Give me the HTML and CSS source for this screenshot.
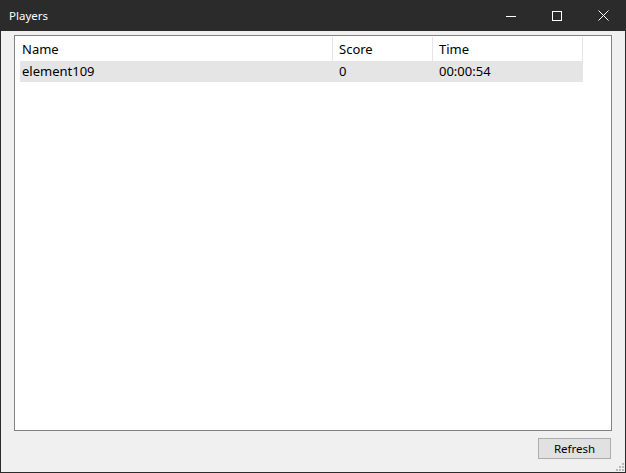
FILE: index.html
```html
<!DOCTYPE html>
<html>
<head>
<meta charset="utf-8">
<link rel="stylesheet" href="styles.css">
</head>
<body>
<div class="window">
  <div class="titlebar">
    <span class="title">Players</span>
    <div class="controls">
      <span class="ctl"><svg width="10" height="10" viewBox="0 0 10 10"><line x1="0" y1="5.5" x2="10" y2="5.5" stroke="#fff" stroke-width="1"/></svg></span>
      <span class="ctl"><svg width="10" height="10" viewBox="0 0 10 10"><rect x="0.5" y="0.5" width="9" height="9" fill="none" stroke="#fff" stroke-width="1"/></svg></span>
      <span class="ctl"><svg width="11" height="11" viewBox="0 0 11 11"><path d="M0.5 0.5 L10.5 10.5 M10.5 0.5 L0.5 10.5" stroke="#fff" stroke-width="1"/></svg></span>
    </div>
  </div>
  <div class="content">
    <div class="frame">
      <div class="table">
        <div class="row header">
          <div class="cell c1">Name</div>
          <div class="cell c2">Score</div>
          <div class="cell c3">Time</div>
        </div>
        <div class="row data">
          <div class="cell c1">element109</div>
          <div class="cell c2">0</div>
          <div class="cell c3">00:00:54</div>
        </div>
      </div>
    </div>
    <div class="footer">
      <button class="btn">Refresh</button>
    </div>
  </div>
  <div class="grip">
    <svg width="8" height="8" viewBox="0 0 8 8" fill="#b8b8b8">
      <rect x="6" y="0" width="2" height="2"/>
      <rect x="3" y="3" width="2" height="2"/><rect x="6" y="3" width="2" height="2"/>
      <rect x="0" y="6" width="2" height="2"/><rect x="3" y="6" width="2" height="2"/><rect x="6" y="6" width="2" height="2"/>
    </svg>
  </div>
</div>
</body>
</html>
```

FILE: styles.css
```css
html, body {
  margin: 0;
  padding: 0;
  background: #f0f0f0;
}
.window {
  position: relative;
  width: 626px;
  height: 473px;
  box-sizing: border-box;
  border: 1px solid #2b2b2b;
  border-top: none;
  background: #f0f0f0;
  display: flex;
  flex-direction: column;
  font-family: "Noto Sans", "Open Sans", sans-serif;
  font-size: 13px;
  color: #000;
}
.titlebar {
  height: 31px;
  margin: 0 -1px;
  background: #2b2b2b;
  display: flex;
  align-items: center;
  justify-content: space-between;
  color: #fff;
}
.title {
  padding-left: 9px;
  font-size: 11.5px;
  padding-bottom: 1px;
}
.controls {
  display: flex;
  height: 100%;
}
.ctl {
  width: 46px;
  height: 100%;
  display: flex;
  align-items: center;
  justify-content: center;
}
.content {
  flex: 1;
  display: flex;
  flex-direction: column;
  padding: 4px 13px 0 13px;
}
.frame {
  height: 396px;
  box-sizing: border-box;
  border: 1px solid #828282;
  background: #fff;
  padding: 1px 5px;
}
.table {
  width: 563px;
}
.row {
  display: flex;
}
.header {
  height: 24px;
}
.header .cell {
  border-right: 1px solid #e5e5e5;
  line-height: 24px;
}
.data {
  height: 21px;
  background: #e5e5e5;
}
.data .cell {
  line-height: 21px;
}
.cell {
  box-sizing: border-box;
  padding-left: 2px;
  white-space: nowrap;
}
.c1 { width: 313px; }
.c2 { width: 100px; padding-left: 6px; }
.c3 { width: 150px; padding-left: 6px; }
.footer {
  display: flex;
  justify-content: flex-end;
  padding-top: 7px;
}
.btn {
  width: 73px;
  height: 21px;
  margin-right: 1px;
  border: 1px solid #adadad;
  background: #e1e1e1;
  font-family: "Noto Sans", "Open Sans", sans-serif;
  font-size: 11.5px;
  color: #000;
  padding: 0;
}
.grip {
  position: absolute;
  right: 1px;
  bottom: 1px;
  width: 8px;
  height: 8px;
  display: flex;
}
```
